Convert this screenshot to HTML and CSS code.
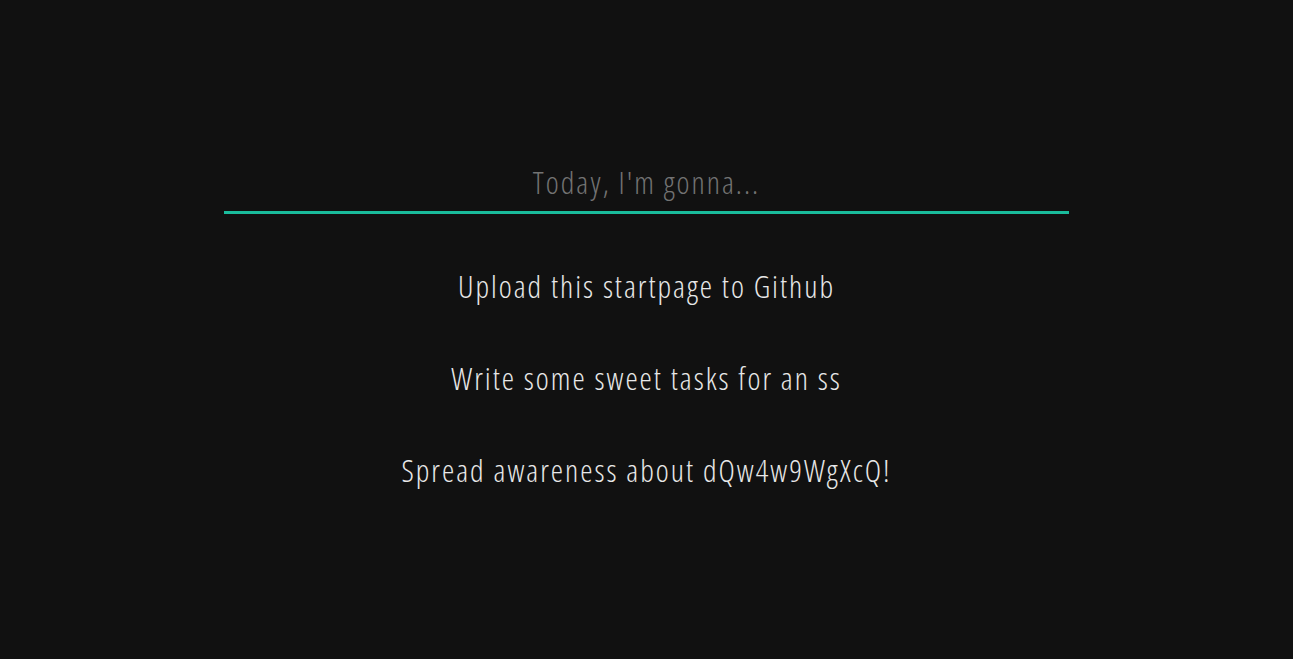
FILE: index.html
```html
<!DOCTYPE html>
<html>
<head>
<meta charset="utf-8">
<title>Startpage</title>
<link rel="stylesheet" href="styles.css">
</head>
<body>
<main class="page">
  <input class="task-input" type="text" placeholder="Today, I'm gonna...">
  <ul class="tasks">
    <li class="task">Upload this startpage to Github</li>
    <li class="task">Write some sweet tasks for an ss</li>
    <li class="task">Spread awareness about dQw4w9WgXcQ!</li>
  </ul>
</main>
</body>
</html>
```
FILE: styles.css
```css
html, body {
  margin: 0;
  padding: 0;
  background: #111111;
  height: 100%;
}
.page {
  display: flex;
  flex-direction: column;
  align-items: center;
  padding-top: 153px;
  font-family: "Open Sans", "Liberation Sans", sans-serif;
  font-stretch: 75%;
  font-weight: 300;
  font-size: 31px;
  letter-spacing: 2px;
}
.task-input {
  box-sizing: content-box;
  width: 845px;
  height: 58px;
  padding: 0;
  margin: 0;
  border: none;
  border-bottom: 3px solid #1abc9c;
  background: transparent;
  color: #e8e8e8;
  font: inherit;
  letter-spacing: inherit;
  text-align: center;
  outline: none;
}
.task-input::placeholder {
  color: #737373;
  opacity: 1;
}
.tasks {
  list-style: none;
  margin: 26px 0 0;
  padding: 0;
  text-align: center;
}
.task {
  line-height: 92px;
  color: #e8e8e8;
}
```
